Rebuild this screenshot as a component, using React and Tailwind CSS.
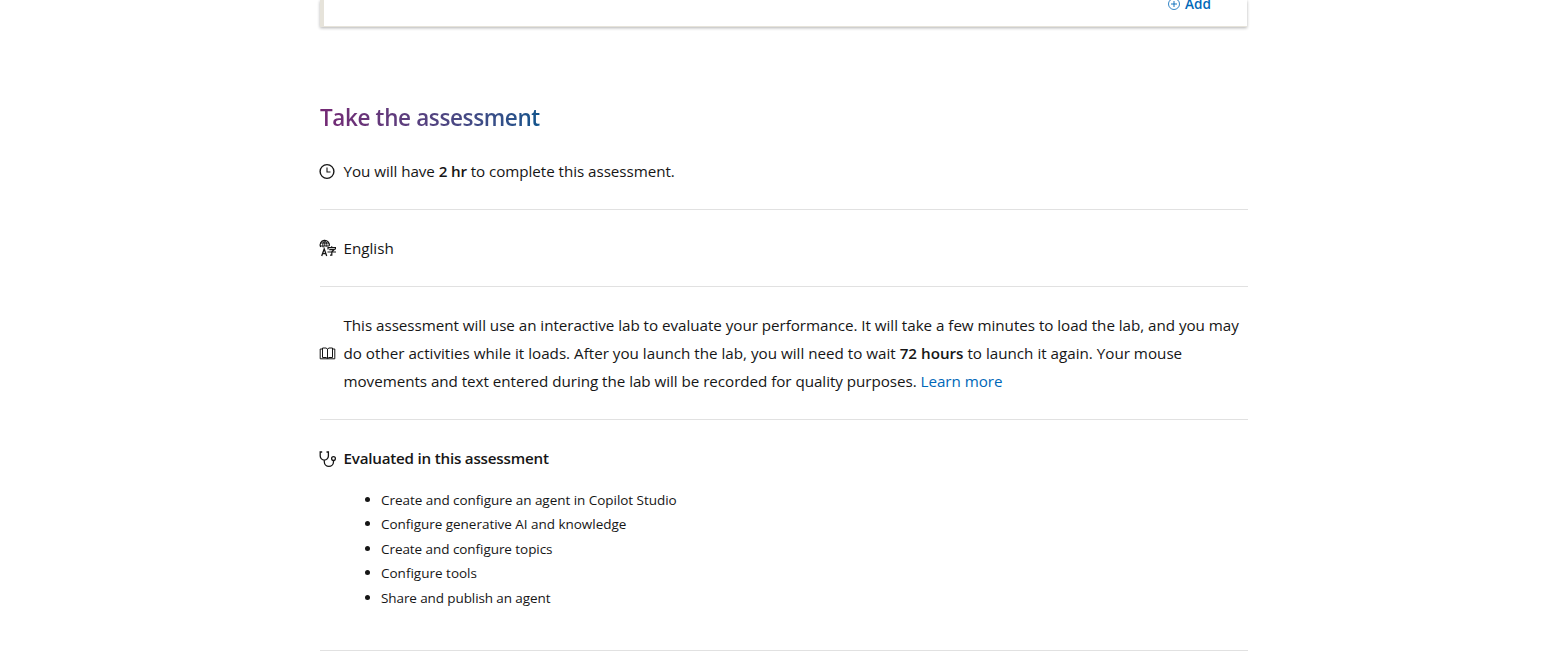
import React from 'react';

const skills = [
  { text: 'Create and configure an agent in Copilot Studio', spacing: 'tracking-[-0.04px]' },
  { text: 'Configure generative AI and knowledge', spacing: 'tracking-[-0.03px]' },
  { text: 'Create and configure topics', spacing: 'tracking-[-0.06px]' },
  { text: 'Configure tools', spacing: 'tracking-normal' },
  { text: 'Share and publish an agent', spacing: 'tracking-[-0.1px]' },
];

const AddIcon = () => (
  <svg className="w-3 h-3 shrink-0" viewBox="0 0 12 12" fill="none" stroke="currentColor">
    <circle cx="6" cy="6" r="5.5" strokeWidth="0.8" />
    <path d="M6 3v6M3 6h6" strokeWidth="0.9" />
  </svg>
);

const ClockIcon = () => (
  <svg className="w-4 h-4 shrink-0 overflow-visible" viewBox="0 0 16 16" fill="none" stroke="currentColor">
    <circle cx="7" cy="8.5" r="6.9" strokeWidth="1.4" />
    <path d="M7 4.5v4.5h3.5" strokeWidth="1.1" />
  </svg>
);

const LanguageIcon = () => (
  <svg className="w-4 h-4 shrink-0 overflow-visible" viewBox="0 0 16 16" fill="none" stroke="currentColor">
    <path d="M0.6 7A4.6 4.6 0 1 1 9.2 6" strokeWidth="1.2" />
    <path d="M3.2 7.5C2.2 4.5 3 1.5 4.8 0.6C6.6 1.5 7 4 6.8 6.5" strokeWidth="1" />
    <path d="M0.5 3h8.6M0.3 6h8.8M4.8 0.6V6" strokeWidth="1" />
    <path d="M1.7 16L4.2 9L6.7 16M2.6 13.7h3.2" strokeWidth="1.3" />
    <path d="M8 9.5V7.7h7.4v1.8M11.7 6.2v1.5M9.3 9.7h4.8l-2.3 2v3.5h-1.8M7.5 12h8.5" strokeWidth="1.2" />
  </svg>
);

const BookIcon = () => (
  <svg className="w-4 h-4 shrink-0 overflow-visible" viewBox="0 0 16 16" fill="none" stroke="currentColor">
    <path d="M2.5 3H6L7.5 4L9 3H12.5V12.5H9L7.5 13.5L6 12.5H2.5Z" strokeWidth="1" />
    <path d="M7.5 4v9.5M2.5 4H0.2v9.8h14.6V4h-2.3" strokeWidth="1" />
  </svg>
);

const StethoscopeIcon = () => (
  <svg className="w-4 h-4 shrink-0 overflow-visible" viewBox="0 0 16 16" fill="none" stroke="currentColor" strokeWidth="1.3">
    <path d="M2.2 2H0.2v4a4.1 4.1 0 0 0 8.2 0V2H6.5" />
    <path d="M4.3 10.2v1.5a4.6 4.6 0 0 0 9.2 0v-1.3" />
    <circle cx="13.5" cy="8.6" r="1.9" />
  </svg>
);

// One row of the assessment details, separated from the next by a thin rule
const DetailRow = ({ icon, children }) => (
  <div className="flex items-center gap-[7.5px] border-b border-[#e1e1e1] py-6 leading-7">
    {icon}
    <div className="whitespace-nowrap">{children}</div>
  </div>
);

const App = () => {
  return (
    <div className="h-[660px] overflow-hidden bg-white text-[15.2px] text-[#161616] font-['Open_Sans','Noto_Sans',sans-serif]">
      <main className="ml-[320px] w-[928px]">
        {/* Bottom edge of the plan card */}
        <div className="mr-px flex h-[27px] justify-end border-l-4 border-b border-[#e6e3da] pr-9 shadow-[0_1px_3px_rgba(0,0,0,0.3)]">
          <button className="-mt-2 flex h-6 items-center gap-[5px] text-[13.6px] font-semibold text-[#0067b8]">
            <AddIcon />
            Add
          </button>
        </div>

        <h2 className="mt-[75px] -mb-px w-fit bg-linear-to-r from-[#742774] to-[#0f548c] bg-clip-text text-[22.5px] leading-8 font-semibold tracking-[-0.37px] text-transparent">
          Take the assessment
        </h2>

        <DetailRow icon={<ClockIcon />}>
          <span className="tracking-[-0.05px]">
            You will have <strong className="font-semibold tracking-[-0.2px]">2 hr</strong> to complete this assessment.
          </span>
        </DetailRow>

        <DetailRow icon={<LanguageIcon />}>English</DetailRow>

        <DetailRow icon={<BookIcon />}>
          <p className="tracking-[-0.035px]">This assessment will use an interactive lab to evaluate your performance. It will take a few minutes to load the lab, and you may</p>
          <p>
            do other activities while it loads. After you launch the lab, you will need to wait <strong className="font-semibold">72 hours</strong> to launch it again. Your mouse
          </p>
          <p className="tracking-[-0.04px]">
            movements and text entered during the lab will be recorded for quality purposes.{' '}
            <a href="#" className="text-[#0067b8]">Learn more</a>
          </p>
        </DetailRow>

        <section className="h-[231px] border-b border-[#e1e1e1] pt-6">
          <div className="flex items-center gap-[7.5px] leading-7">
            <StethoscopeIcon />
            <h3 className="font-semibold tracking-[-0.22px]">Evaluated in this assessment</h3>
          </div>
          <ul className="mt-[15.6px] ml-[45px] text-[13.5px] leading-[24.5px]">
            {skills.map((skill) => (
              <li key={skill.text} className="flex items-center gap-[11px]">
                <span className="mb-px size-[5px] rounded-full bg-[#161616]" />
                <span className={skill.spacing}>{skill.text}</span>
              </li>
            ))}
          </ul>
        </section>
      </main>
    </div>
  );
};

export default App;
